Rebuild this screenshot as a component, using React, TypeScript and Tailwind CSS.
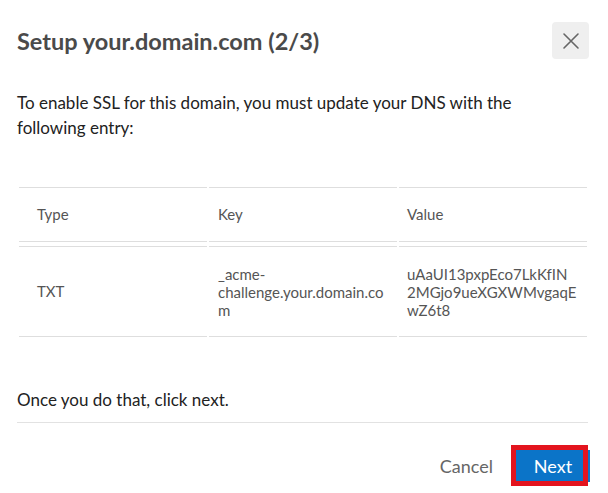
import React from "react";

export default function App() {
  return (
    <div
      className="relative w-[608px] h-[493px] bg-white overflow-hidden"
      style={{ fontFamily: "Lato, 'Open Sans', sans-serif" }}
    >
      <div className="px-[17px]">
        <div className="flex items-center justify-between pt-[22px]">
          <h1 className="text-[23.5px] leading-[30px] font-bold text-[#4a4a4a]">
            Setup your.domain.com (2/3)
          </h1>
          <button className="w-[37px] h-[37px] mr-[2px] rounded-[4px] bg-[#efefef] flex items-center justify-center">
            <svg width="18" height="18" viewBox="0 0 18 18" fill="none">
              <path d="M2 2 L16 16 M16 2 L2 16" stroke="#666" strokeWidth="1.6" strokeLinecap="round" />
            </svg>
          </button>
        </div>

        <p className="mt-[31px] text-[17px] leading-[25px] text-[#222] w-[540px]">
          To enable SSL for this domain, you must update your DNS with the following entry:
        </p>

        <div className="mt-[47px] ml-[2px] w-[568px] text-[15px] text-[#555]">
          <div className="grid grid-cols-3 gap-x-[2px]">
            <div className="h-[55px] border-y border-[#dedede] flex items-center pl-[18px]">Type</div>
            <div className="h-[55px] border-y border-[#dedede] flex items-center pl-[9px]">Key</div>
            <div className="h-[55px] border-y border-[#dedede] flex items-center pl-[8px]">Value</div>
          </div>
          <div className="grid grid-cols-3 gap-x-[2px] mt-[4px]">
            <div className="h-[91px] border-y border-[#dedede] flex items-center pl-[18px]">TXT</div>
            <div className="h-[91px] border-y border-[#dedede] flex items-center pl-[9px] pr-[9px]">
              <div className="leading-[18px] [overflow-wrap:anywhere] min-w-0">_acme-challenge.your.domain.com</div>
            </div>
            <div className="h-[91px] border-y border-[#dedede] flex items-center pl-[8px] pr-[10px]">
              <div className="leading-[18px] min-w-0">
                uAaUI13pxpEco7LkKfIN
                <br />
                2MGjo9ueXGXWMvgaqE
                <br />
                wZ6t8
              </div>
            </div>
          </div>
        </div>

        <p className="mt-[50px] text-[17px] leading-[25px] text-[#222]">Once you do that, click next.</p>

        <div className="mt-[10px] w-[571px] h-px bg-[#e2e2e2]" />

        <div className="flex items-center justify-end mt-[27px] pr-[1px]">
          <button className="text-[18px] leading-[32px] text-[#666] mr-[23px]">Cancel</button>
          <div className="relative">
            <button className="w-[74px] h-[32px] bg-[#0b74c8] text-white text-[18px] flex items-center justify-center">
              Next
            </button>
            <div className="absolute left-[-5px] top-[-5px] w-[77px] h-[41px] border-[5px] border-[#e3141e] pointer-events-none" />
          </div>
        </div>
      </div>
    </div>
  );
}
